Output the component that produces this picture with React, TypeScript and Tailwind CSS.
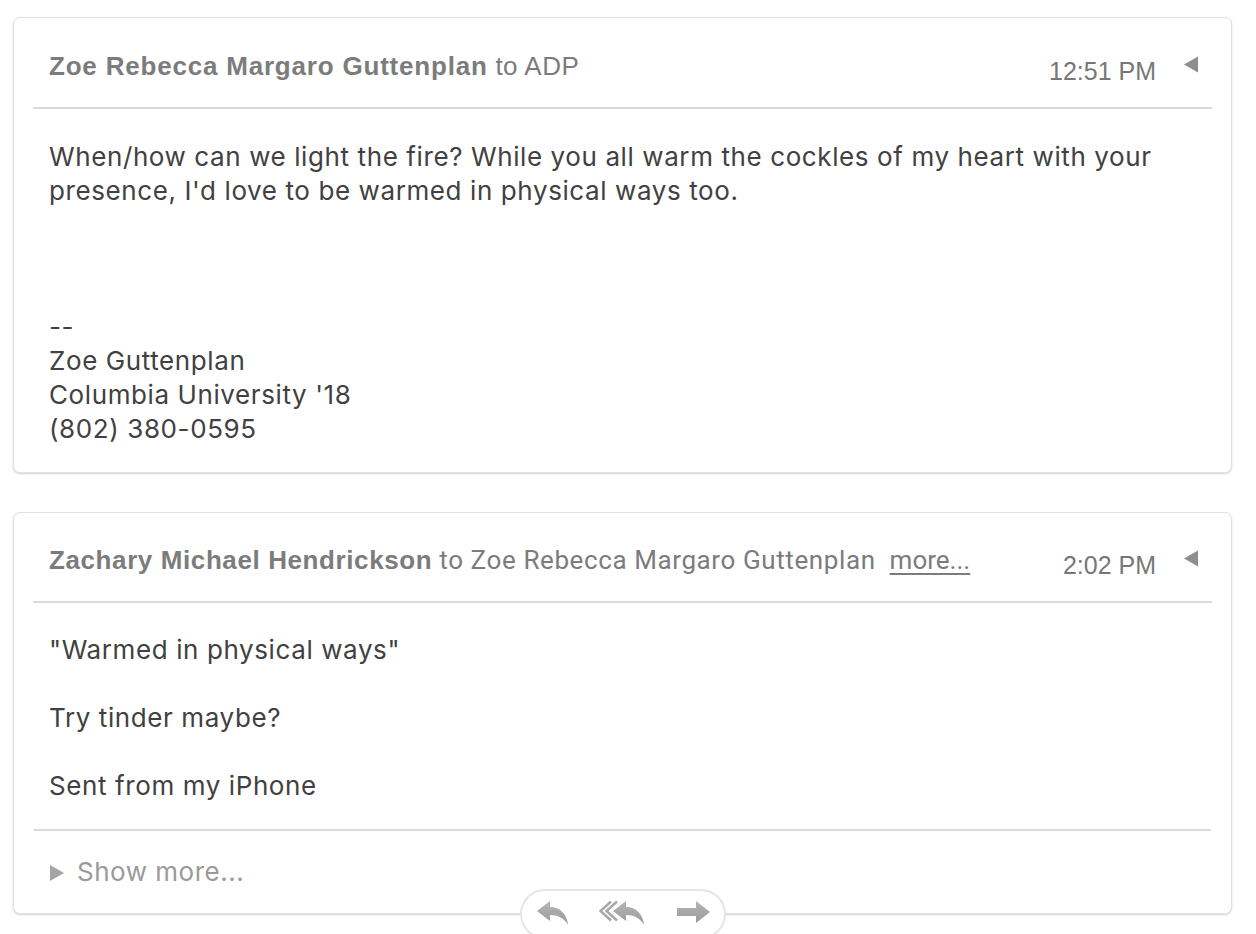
import React from "react";

const ReplyIcon = () => (
  <svg width="34" height="26" viewBox="0 0 34 26">
    <defs>
      <linearGradient id="g1" x1="0" y1="0" x2="0" y2="1">
        <stop offset="0" stopColor="#b5b5b5" />
        <stop offset="1" stopColor="#9a9a9a" />
      </linearGradient>
    </defs>
    <path d="M1 11 L14 1 L14 7 C24 7 31 14 32 25 C28 18 22 15 14 15 L14 21 Z" fill="url(#g1)" />
  </svg>
);

const ReplyAllIcon = () => (
  <svg width="48" height="26" viewBox="0 0 48 26">
    <path d="M12 1.5 L1.5 11 L12 20.5" fill="none" stroke="#a8a8a8" strokeWidth="2.5" />
    <path d="M18 1.5 L7.5 11 L18 20.5" fill="none" stroke="#a8a8a8" strokeWidth="2.5" />
    <path d="M14 11 L27 1 L27 7 C37 7 44 14 45 25 C41 18 35 15 27 15 L27 21 Z" fill="url(#g1)" />
  </svg>
);

const ForwardIcon = () => (
  <svg width="36" height="24" viewBox="0 0 36 24">
    <path d="M1 8 H20 V1 L34 12 L20 23 V16 H1 Z" fill="url(#g1)" />
  </svg>
);

const Caret = () => (
  <svg width="15" height="17" viewBox="0 0 15 17">
    <path d="M15 0.5 L1 8.5 L15 16.5 Z" fill="#8e8e8e" />
  </svg>
);

const body = "text-[26px] leading-[34px] tracking-[0.6px] text-[#414141]";
const sans = { fontFamily: "Inter, 'Noto Sans', sans-serif" };
const helv = { fontFamily: "'Liberation Sans', Arial, sans-serif" };
const robo = { fontFamily: "Roboto, sans-serif" };

export default function App() {
  return (
    <div className="min-h-screen bg-white pl-[13px] pr-[24px] pt-[17px]">
      {/* first message */}
      <div className="rounded-[7px] border border-[#e2e2e2] bg-white shadow-[0_1px_2px_rgba(0,0,0,0.18)]">
        <div className="mx-[19px] flex h-[91px] items-start border-b-2 border-[#dadada] pl-[16px] pr-[14px]">
          <div className="mt-[29px] flex-1 text-[26px] text-[#7c7c7c]" style={helv}>
            <span className="font-bold tracking-[0.8px]">Zoe Rebecca Margaro Guttenplan</span>
            <span className="tracking-[0.5px]"> to ADP</span>
          </div>
          <div className="mt-[35px] text-[25px] text-[#777]" style={helv}>12:51 PM</div>
          <div className="ml-[27px] mt-[38px]"><Caret /></div>
        </div>
        <div className={`px-[35px] pb-[26px] pt-[31px] ${body}`} style={sans}>
          <p>When/how can we light the fire? While you all warm the cockles of my heart with your presence, I'd love to be warmed in physical ways too.</p>
          <div className="h-[102px]" />
          <p>--</p>
          <p>Zoe Guttenplan</p>
          <p>Columbia University '18</p>
          <p>(802) 380-0595</p>
        </div>
      </div>

      {/* second message */}
      <div className="relative mt-[39px] rounded-[7px] border border-[#e2e2e2] bg-white shadow-[0_1px_2px_rgba(0,0,0,0.18)]">
        <div className="mx-[19px] flex h-[90px] items-start border-b-2 border-[#dadada] pl-[16px] pr-[14px]">
          <div className="mt-[27px] flex-1 text-[26px] text-[#7c7c7c]">
            <span className="font-bold tracking-[0.6px]" style={helv}>Zachary Michael Hendrickson</span>
            <span className="tracking-[0.6px]" style={robo}> to Zoe Rebecca Margaro Guttenplan</span>
            <span className="ml-[14px] underline underline-offset-[4px]" style={robo}>more...</span>
          </div>
          <div className="mt-[34px] text-[25px] text-[#777]" style={helv}>2:02 PM</div>
          <div className="ml-[27px] mt-[37px]"><Caret /></div>
        </div>
        <div className={`px-[35px] pt-[30px] pb-[26px] ${body}`} style={sans}>
          <p>"Warmed in physical ways"</p>
          <p className="mt-[34px]">Try tinder maybe?</p>
          <p className="mt-[34px]">Sent from my iPhone</p>
        </div>
        <div className="mx-[20px] border-t-2 border-[#dadada]" />
        <div className="flex h-[82px] items-start pl-[35px] pt-[24px] text-[26px] tracking-[0.5px] text-[#9a9a9a]" style={sans}>
          <svg className="mt-[9px]" width="16" height="18" viewBox="0 0 16 18">
            <path d="M1 1 L15 9 L1 17 Z" fill="#a5a5a5" />
          </svg>
          <span className="ml-[12px] leading-[34px]">Show more...</span>
        </div>
        <div className="absolute left-1/2 top-[376px] flex h-[50px] w-[206px] -translate-x-1/2 items-start justify-between rounded-full border-2 border-[#e6e6e6] bg-white pl-[14px] pr-[12px] pt-[9px]">
          <ReplyIcon />
          <ReplyAllIcon />
          <ForwardIcon />
        </div>
      </div>
    </div>
  );
}
